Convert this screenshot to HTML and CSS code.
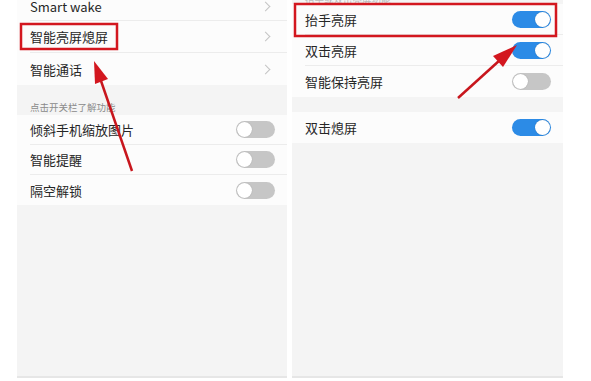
FILE: index.html
```html
<!DOCTYPE html>
<html lang="zh-CN">
<head>
    <meta charset="UTF-8">
    <meta name="viewport" content="width=device-width, initial-scale=1.0">
    <title>智能亮屏熄屏</title>
    <link rel="stylesheet" href="styles.css">
</head>
<body>
    <div class="screens">
        <div class="panel panel-left">
            <div class="group first">
                <div class="row cut"><span>Smart wake</span><i class="chevron"></i></div>
                <div class="row"><span>智能亮屏熄屏</span><i class="chevron"></i></div>
                <div class="row"><span>智能通话</span><i class="chevron"></i></div>
            </div>
            <div class="caption">点击开关栏了解功能</div>
            <div class="group">
                <div class="row short"><span>倾斜手机缩放图片</span><i class="toggle"></i></div>
                <div class="row short"><span>智能提醒</span><i class="toggle"></i></div>
                <div class="row short"><span>隔空解锁</span><i class="toggle"></i></div>
            </div>
        </div>
        <div class="panel panel-right">
            <div class="caption top">抬手或双击亮屏功能</div>
            <div class="group">
                <div class="row mid"><span>抬手亮屏</span><i class="toggle on"></i></div>
                <div class="row mid"><span>双击亮屏</span><i class="toggle on"></i></div>
                <div class="row mid"><span>智能保持亮屏</span><i class="toggle"></i></div>
            </div>
            <div class="spacer"></div>
            <div class="group">
                <div class="row mid"><span>双击熄屏</span><i class="toggle on"></i></div>
            </div>
        </div>
    </div>

    <svg class="marks" width="591" height="381" viewBox="0 0 591 381">
        <rect x="21" y="24" width="96" height="25" fill="none" stroke="#d3171f" stroke-width="2.5"/>
        <rect x="295" y="4" width="261" height="32" fill="none" stroke="#d3171f" stroke-width="2.5"/>
        <line x1="132" y1="171" x2="100" y2="78" stroke="#c8161d" stroke-width="2.5"/>
        <polygon points="94,61 108,79 95,84" fill="#d3171f"/>
        <line x1="458" y1="98" x2="500" y2="60" stroke="#c8161d" stroke-width="2.5"/>
        <polygon points="517,45 503,67 493,56" fill="#d3171f"/>
    </svg>
</body>
</html>
```

FILE: styles.css
```css
body {
    margin: 0;
    background-color: white;
    font-family: "Noto Sans CJK SC", "Noto Sans", sans-serif;
    color: #262626;
}
.screens {
    display: flex;
    gap: 5px;
    padding-left: 17px;
    height: 378px;
}
.panel {
    background-color: #f4f4f4;
    overflow: hidden;
    border-bottom: 2px solid #e6e6e6;
}
.panel-left {
    width: 270px;
}
.panel-right {
    width: 271px;
}
.group {
    background-color: #fcfcfc;
}
.group.first {
    margin-top: -8px;
}
.row {
    height: 32px;
    margin-left: 13px;
    padding-right: 12px;
    display: flex;
    align-items: center;
    justify-content: space-between;
    font-size: 13px;
    border-bottom: 1px solid #ececec;
    box-sizing: border-box;
}
.row:last-child {
    border-bottom: none;
}
.row.cut {
    height: 29px;
}
.row.short {
    height: 30px;
}
.row.mid {
    height: 31px;
}
.chevron {
    width: 6px;
    height: 6px;
    border-top: 1px solid #c4c4c4;
    border-right: 1px solid #c4c4c4;
    transform: rotate(45deg);
    margin-right: 6px;
}
.toggle {
    position: relative;
    width: 39px;
    height: 17px;
    border-radius: 9px;
    background-color: #c6c6c6;
}
.toggle::after {
    content: "";
    position: absolute;
    top: 1px;
    left: 1px;
    width: 15px;
    height: 15px;
    border-radius: 50%;
    background-color: white;
    box-shadow: 0 0 1px rgba(0, 0, 0, 0.3);
}
.toggle.on {
    background-color: #2c8be6;
}
.toggle.on::after {
    left: 23px;
}
.caption {
    height: 30px;
    box-sizing: border-box;
    padding: 15px 0 0 13px;
    font-size: 9.5px;
    color: #8a8a8a;
}
.caption.top {
    padding-top: 0;
    margin-top: -8px;
    height: 12px;
    color: #bbb;
}
.spacer {
    height: 15px;
}
.marks {
    position: absolute;
    top: 0;
    left: 0;
    pointer-events: none;
}
```
